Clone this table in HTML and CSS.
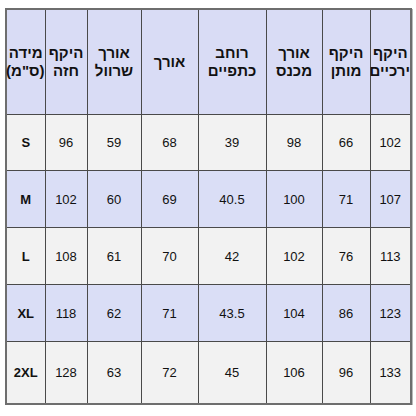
FILE: index.html
```html
<!DOCTYPE html>
<html lang="he">
<head>
<meta charset="utf-8">
<link rel="stylesheet" href="styles.css">
</head>
<body>
<div class="wrap">
<table class="chart" dir="rtl">
<colgroup>
<col class="c1"><col class="c2"><col class="c3"><col class="c4"><col class="c5"><col class="c6"><col class="c7"><col class="c8">
</colgroup>
<thead>
<tr class="head">
<th>היקף<br>ירכיים</th>
<th>היקף<br>מותן</th>
<th>אורך<br>מכנס</th>
<th>רוחב<br>כתפיים</th>
<th>אורך</th>
<th>אורך<br>שרוול</th>
<th>היקף<br>חזה</th>
<th>מידה<br>(ס"מ)</th>
</tr>
</thead>
<tbody>
<tr class="light r1"><td>102</td><td>66</td><td>98</td><td>39</td><td>68</td><td>59</td><td>96</td><td class="size">S</td></tr>
<tr class="blue r2"><td>107</td><td>71</td><td>100</td><td>40.5</td><td>69</td><td>60</td><td>102</td><td class="size">M</td></tr>
<tr class="light r3"><td>113</td><td>76</td><td>102</td><td>42</td><td>70</td><td>61</td><td>108</td><td class="size">L</td></tr>
<tr class="blue r4"><td>123</td><td>86</td><td>104</td><td>43.5</td><td>71</td><td>62</td><td>118</td><td class="size">XL</td></tr>
<tr class="light r5"><td>133</td><td>96</td><td>106</td><td>45</td><td>72</td><td>63</td><td>128</td><td class="size">2XL</td></tr>
</tbody>
</table>
</div>
</body>
</html>
```
FILE: styles.css
```css
html, body {
  margin: 0;
  padding: 0;
  background: #ffffff;
}
.wrap {
  padding: 8px 0 0 5px;
}
.chart {
  border-collapse: collapse;
  table-layout: fixed;
  width: 405px;
  font-family: "Liberation Sans", Arial, sans-serif;
  color: #111;
  border: 2px solid #6e6e6e;
  box-shadow: 1px 1px 0 #b8b8b8;
}
.c1 { width: 41px; }
.c2 { width: 48px; }
.c3 { width: 56px; }
.c4 { width: 68px; }
.c5 { width: 57px; }
.c6 { width: 54px; }
.c7 { width: 42px; }
.c8 { width: 39px; }
.chart th, .chart td {
  border: 1px solid #4a4a4a;
  padding: 0;
  text-align: center;
  vertical-align: middle;
}
.chart th {
  font-size: 15px;
  font-weight: bold;
  line-height: 18px;
  height: 104px;
  background: #d9dcf5;
}
.chart td {
  font-size: 13px;
}
.light td { background: #f2f2f2; }
.blue td { background: #dadef6; }
.chart td.size { font-weight: bold; }
.r1 td { height: 55px; }
.r2 td { height: 56px; }
.r3 td { height: 56px; }
.r4 td { height: 56px; }
.r5 td { height: 61px; }
```
